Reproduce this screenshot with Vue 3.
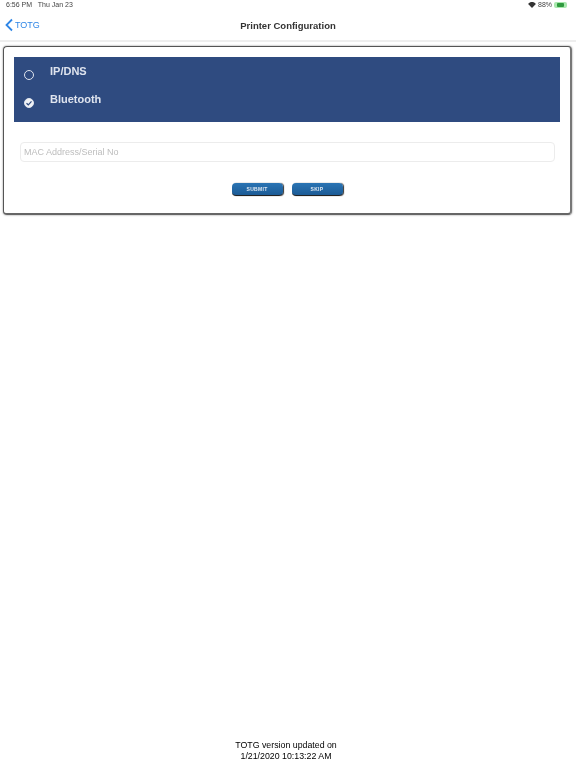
<script setup>
const options = [
  { label: 'IP/DNS', checked: false },
  { label: 'Bluetooth', checked: true }
]
const buttons = ['SUBMIT', 'SKIP']
</script>

<template>
  <div class="page">
    <div class="status">
      <span class="status-left">6:56 PM&nbsp;&nbsp; Thu Jan 23</span>
      <span class="status-right">
        <svg class="wifi" width="8" height="6" viewBox="0 0 18 14">
          <path d="M9 14 L0 4.5 C5 -1.2 13 -1.2 18 4.5 Z" fill="#333" />
        </svg>
        <span>88%</span>
        <span class="battery"><span class="battery-fill"></span></span>
      </span>
    </div>
    <div class="nav">
      <div class="back">
        <svg width="10" height="14" viewBox="0 0 10 14">
          <path d="M8 1.5 L2.5 7 L8 12.5" fill="none" stroke="#2f86e6" stroke-width="1.8" />
        </svg>
        <span>TOTG</span>
      </div>
      <div class="title">Printer Configuration</div>
    </div>
    <div class="card">
      <div class="panel">
        <div v-for="o in options" :key="o.label" class="option">
          <span class="radio" :class="{ on: o.checked }">
            <svg v-if="o.checked" width="8" height="8" viewBox="0 0 8 8">
              <path d="M1.5 4.2 L3.3 5.8 L6.5 2.4" fill="none" stroke="#2f4b80" stroke-width="1.2" />
            </svg>
          </span>
          <span class="label">{{ o.label }}</span>
        </div>
      </div>
      <div class="input">MAC Address/Serial No</div>
      <div class="actions">
        <div v-for="b in buttons" :key="b" class="btn">{{ b }}</div>
      </div>
    </div>
    <div class="spacer"></div>
    <div class="footer">TOTG version updated on<br />1/21/2020 10:13:22 AM</div>
  </div>
</template>

<style scoped>
.page {
  width: 576px;
  height: 768px;
  display: flex;
  flex-direction: column;
  background: #fff;
  font-family: "Liberation Sans", Arial, sans-serif;
  overflow: hidden;
  filter: blur(0.4px);
}
.status {
  height: 9px;
  display: flex;
  justify-content: space-between;
  align-items: center;
  padding: 0 9px 0 6px;
  font-size: 7px;
  color: #444;
}
.status-right {
  display: flex;
  align-items: center;
  gap: 2px;
}
.battery {
  width: 13px;
  height: 6px;
  padding: 1px 3px;
  box-sizing: border-box;
  border-radius: 2px;
  background: #a9e8ae;
  display: flex;
}
.battery-fill {
  flex: 1;
  background: #2f9a3e;
  border-radius: 1px;
}
.nav {
  height: 31px;
  display: flex;
  align-items: center;
  justify-content: center;
  position: relative;
  border-bottom: 2px solid #eeeeee;
}
.back {
  position: absolute;
  left: 4px;
  top: 9px;
  display: flex;
  align-items: center;
  gap: 1px;
  color: #2f86e6;
  font-size: 9px;
}
.title {
  padding-top: 2px;
  font-size: 9.5px;
  font-weight: 700;
  color: #333;
}
.card {
  margin: 4px 3px 0;
  width: 569px;
  height: 169px;
  box-sizing: border-box;
  padding: 10px 10px 0;
  border: 1px solid #555;
  border-right: 2px solid #777;
  border-bottom: 2px solid #666;
  border-radius: 4px;
  box-shadow: 0 0 2px rgba(0, 0, 0, 0.5);
}
.panel {
  height: 65px;
  box-sizing: border-box;
  background: #2f4b80;
  padding: 0 10px;
  display: flex;
  flex-direction: column;
}
.option {
  height: 28px;
  display: flex;
  align-items: center;
  gap: 16px;
}
.radio {
  width: 10px;
  height: 10px;
  margin-top: 7px;
  box-sizing: border-box;
  border: 1.5px solid #dfe4ee;
  border-radius: 50%;
  display: flex;
  align-items: center;
  justify-content: center;
}
.radio.on {
  background: #f0f2f6;
}
.label {
  font-size: 11px;
  font-weight: 700;
  color: #dfe4ee;
  margin-top: -1px;
}
.input {
  margin: 20px 5px 0 6px;
  height: 20px;
  box-sizing: border-box;
  padding-left: 3px;
  border: 1px solid #ececec;
  border-radius: 4px;
  display: flex;
  align-items: center;
  font-size: 9px;
  color: #bdbdbd;
}
.actions {
  margin-top: 21px;
  display: flex;
  justify-content: center;
  gap: 9px;
}
.btn {
  width: 51px;
  height: 13px;
  border-radius: 4px;
  background: linear-gradient(#2a74b4, #1c5b96);
  border-bottom: 1px solid #222;
  box-sizing: border-box;
  box-shadow: 1px 0 1px #333;
  display: flex;
  align-items: center;
  justify-content: center;
  color: #dfe9f3;
  font-size: 5px;
  font-weight: 700;
  letter-spacing: 0.3px;
}
.spacer {
  flex: 1;
}
.footer {
  padding: 0 4px 6px 0;
  text-align: center;
  font-size: 8.8px;
  line-height: 11px;
  color: #000;
}
</style>
